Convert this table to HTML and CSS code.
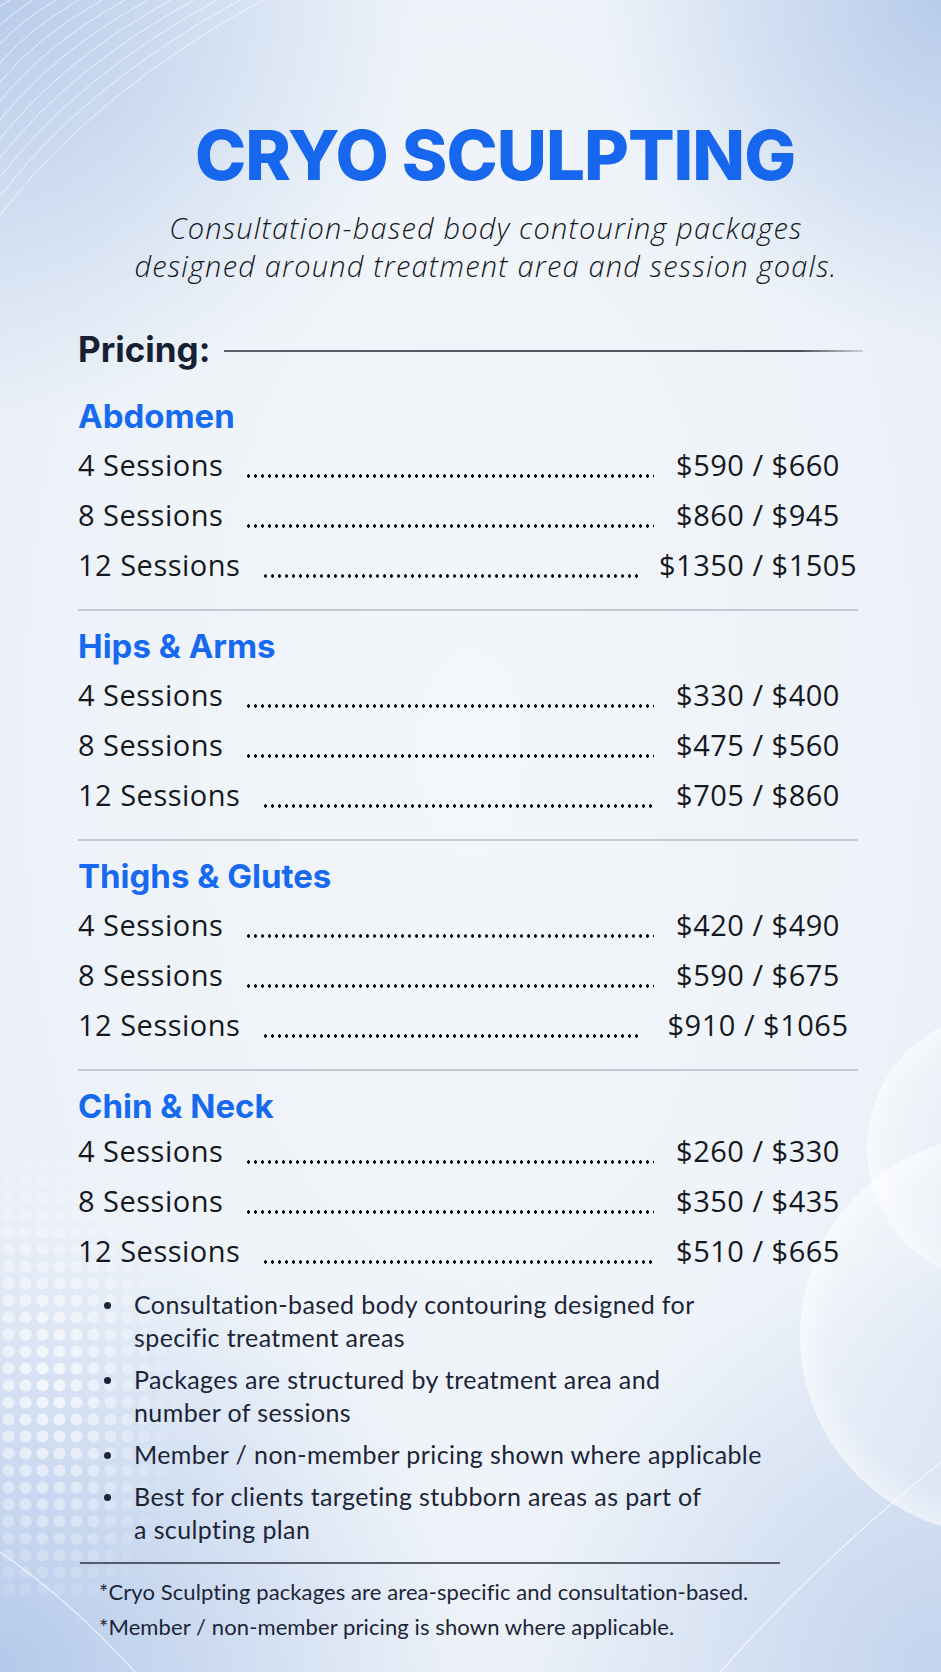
FILE: index.html
```html
<!DOCTYPE html>
<html>
<head>
    <meta charset="UTF-8">
    <title>Cryo Sculpting Pricing</title>
    <link rel="stylesheet" href="styles.css">
</head>
<body>
    <div class="page">
        <svg class="decor" width="941" height="1672" viewBox="0 0 941 1672">
            <defs>
                <pattern id="dots" width="17" height="17" patternUnits="userSpaceOnUse">
                    <circle cx="8.5" cy="8.5" r="6" fill="#ffffff"/>
                </pattern>
                <radialGradient id="dotFade" cx="0.2" cy="0.5" r="0.6">
                    <stop offset="0" stop-color="#fff" stop-opacity="0.75"/>
                    <stop offset="1" stop-color="#fff" stop-opacity="0"/>
                </radialGradient>
                <mask id="dotMask">
                    <rect x="0" y="1160" width="240" height="440" fill="url(#dotFade)"/>
                </mask>
                <radialGradient id="bubble" cx="0.5" cy="0.5" r="0.5">
                    <stop offset="0" stop-color="#d6e2f3" stop-opacity="0.25"/>
                    <stop offset="0.85" stop-color="#ffffff" stop-opacity="0.25"/>
                    <stop offset="1" stop-color="#ffffff" stop-opacity="0.6"/>
                </radialGradient>
            </defs>
            <g fill="none" stroke="#ffffff" stroke-opacity="0.65" stroke-width="1">
                <path d="M0 6 Q5 3 10 0"/>
                <path d="M0 25 Q14 12 33 0"/>
                <path d="M0 44 Q22 20 56 0"/>
                <path d="M0 63 Q30 28 79 0"/>
                <path d="M0 82 Q38 36 102 0"/>
                <path d="M0 101 Q46 44 125 0"/>
                <path d="M0 120 Q54 52 148 0"/>
                <path d="M0 139 Q62 60 171 0"/>
                <path d="M0 158 Q70 68 194 0"/>
                <path d="M0 177 Q78 76 217 0"/>
                <path d="M0 196 Q86 84 240 0"/>
                <path d="M0 215 Q94 92 263 0"/>
            </g>
            <rect x="0" y="1160" width="240" height="440" fill="url(#dots)" mask="url(#dotMask)"/>
            <circle cx="1003" cy="1148" r="136" fill="url(#bubble)"/>
            <circle cx="1000" cy="1335" r="200" fill="url(#bubble)"/>
            <g fill="none" stroke="#ffffff" stroke-opacity="0.6" stroke-width="1.5">
                <path d="M0 1552 Q70 1600 135 1672"/>
                <path d="M941 1462 Q820 1560 720 1672"/>
            </g>
        </svg>

        <main class="sheet">
            <header class="hero">
                <h1 class="title">CRYO SCULPTING</h1>
                <p class="lede">Consultation-based body contouring packages<br>designed around treatment area and session goals.</p>
            </header>

            <div class="pricing-head">
                <h2>Pricing:</h2>
                <span class="rule"></span>
            </div>

            <section class="area">
                <h3>Abdomen</h3>
                <div class="row"><span class="label">4 Sessions</span><span class="leader"></span><span class="price">$590 / $660</span></div>
                <div class="row"><span class="label">8 Sessions</span><span class="leader"></span><span class="price">$860 / $945</span></div>
                <div class="row wide"><span class="label">12 Sessions</span><span class="leader"></span><span class="price">$1350 / $1505</span></div>
            </section>

            <section class="area">
                <h3>Hips &amp; Arms</h3>
                <div class="row"><span class="label">4 Sessions</span><span class="leader"></span><span class="price">$330 / $400</span></div>
                <div class="row"><span class="label">8 Sessions</span><span class="leader"></span><span class="price">$475 / $560</span></div>
                <div class="row"><span class="label">12 Sessions</span><span class="leader"></span><span class="price">$705 / $860</span></div>
            </section>

            <section class="area">
                <h3>Thighs &amp; Glutes</h3>
                <div class="row"><span class="label">4 Sessions</span><span class="leader"></span><span class="price">$420 / $490</span></div>
                <div class="row"><span class="label">8 Sessions</span><span class="leader"></span><span class="price">$590 / $675</span></div>
                <div class="row wide"><span class="label">12 Sessions</span><span class="leader"></span><span class="price">$910 / $1065</span></div>
            </section>

            <section class="area">
                <h3>Chin &amp; Neck</h3>
                <div class="row"><span class="label">4 Sessions</span><span class="leader"></span><span class="price">$260 / $330</span></div>
                <div class="row"><span class="label">8 Sessions</span><span class="leader"></span><span class="price">$350 / $435</span></div>
                <div class="row"><span class="label">12 Sessions</span><span class="leader"></span><span class="price">$510 / $665</span></div>
            </section>

            <ul class="notes">
                <li>Consultation-based body contouring designed for<br>specific treatment areas</li>
                <li>Packages are structured by treatment area and<br>number of sessions</li>
                <li>Member / non-member pricing shown where applicable</li>
                <li>Best for clients targeting stubborn areas as part of<br>a sculpting plan</li>
            </ul>

            <div class="footnotes">
                <p>*Cryo Sculpting packages are area-specific and consultation-based.</p>
                <p>*Member / non-member pricing is shown where applicable.</p>
            </div>
        </main>
    </div>
</body>
</html>
```

FILE: styles.css
```css
body {
    margin: 0;
    font-family: "Open Sans", "Liberation Sans", sans-serif;
    color: #15181e;
}
.page {
    position: relative;
    width: 941px;
    height: 1672px;
    overflow: hidden;
    background:
        radial-gradient(circle at 0% 0%, rgba(172,196,232,0.8), rgba(172,196,232,0) 22%),
        radial-gradient(circle at 100% 0%, rgba(172,196,232,0.8), rgba(172,196,232,0) 18%),
        radial-gradient(circle at 0% 100%, rgba(168,193,232,0.8), rgba(168,193,232,0) 24%),
        radial-gradient(circle at 100% 100%, rgba(172,196,232,0.6), rgba(172,196,232,0) 22%),
        radial-gradient(ellipse at 50% 45%, #f3f6fb 0%, #eef3f9 60%, #e4ebf6 100%);
}
.decor {
    position: absolute;
    top: 0;
    left: 0;
    pointer-events: none;
}
.sheet {
    position: relative;
    z-index: 1;
    padding: 115px 83px 0 78px;
}

/* header */
.hero {
    padding-left: 36px;
    text-align: center;
}
.title {
    margin: 0;
    padding-left: 18px;
    font-family: Inter, "Liberation Sans", sans-serif;
    font-weight: 800;
    font-size: 69px;
    line-height: 80px;
    letter-spacing: -1px;
    color: #1767ee;
}
.lede {
    margin: 14px 0 0;
    font-style: italic;
    font-weight: 300;
    font-size: 29px;
    line-height: 38px;
    letter-spacing: 1.2px;
    color: #15181e;
}

.pricing-head {
    display: flex;
    align-items: center;
    margin-top: 42px;
    margin-right: -5px;
}
.pricing-head h2 {
    margin: 0;
    font-family: Inter, "Liberation Sans", sans-serif;
    font-weight: 700;
    font-size: 35px;
    line-height: 44px;
    color: #172032;
}
.rule {
    flex: 1;
    height: 2px;
    margin: 4px 0 0 14px;
    background: linear-gradient(to right, #59606c, #4a515d 90%, rgba(74,81,93,0.2));
}

/* price sections */
.area {
    padding: 13px 0 19px;
}
.pricing-head + .area {
    padding-top: 0;
    margin-top: 23px;
}
.area + .area {
    border-top: 2px solid #c4c9d2;
}
.area:last-of-type {
    padding-bottom: 12px;
}
.area:last-of-type h3 {
    margin-bottom: -2px;
}
.area h3 {
    margin: 0 0 2px;
    font-family: Inter, "Liberation Sans", sans-serif;
    font-weight: 700;
    font-size: 33px;
    line-height: 44px;
    color: #1769f0;
}
.row {
    display: flex;
    font-size: 29px;
    line-height: 50px;
    letter-spacing: 0.5px;
}
.leader {
    flex: 1;
    margin: 0 4px 0 22px;
    background-image: radial-gradient(circle, #111 1.5px, transparent 1.9px);
    background-size: 7px 4px;
    background-repeat: repeat-x;
    background-position: 0 34px;
}
.row.wide .leader {
    margin-right: 16px;
}
.price {
    flex: 0 0 200px;
    text-align: center;
    white-space: nowrap;
}

/* notes */
.notes {
    margin: 0;
    padding: 0;
    list-style: none;
    font-family: Lato, "Liberation Sans", sans-serif;
    font-size: 25px;
    line-height: 33px;
    letter-spacing: 0.4px;
    color: #1c2537;
}
.notes li {
    position: relative;
    padding-left: 56px;
    margin-bottom: 9px;
}
.notes li::before {
    content: "";
    position: absolute;
    left: 26px;
    top: 14px;
    width: 7px;
    height: 7px;
    border-radius: 50%;
    background: #1c2537;
}
.footnotes {
    margin: 16px 0 0 2px;
    width: 700px;
    padding: 10px 0 0 19px;
    box-sizing: border-box;
    border-top: 2px solid #555c68;
    font-family: Lato, "Liberation Sans", sans-serif;
    font-size: 22px;
    line-height: 35px;
    letter-spacing: 0.1px;
    color: #1c2537;
}
.footnotes p {
    margin: 0;
}
```
